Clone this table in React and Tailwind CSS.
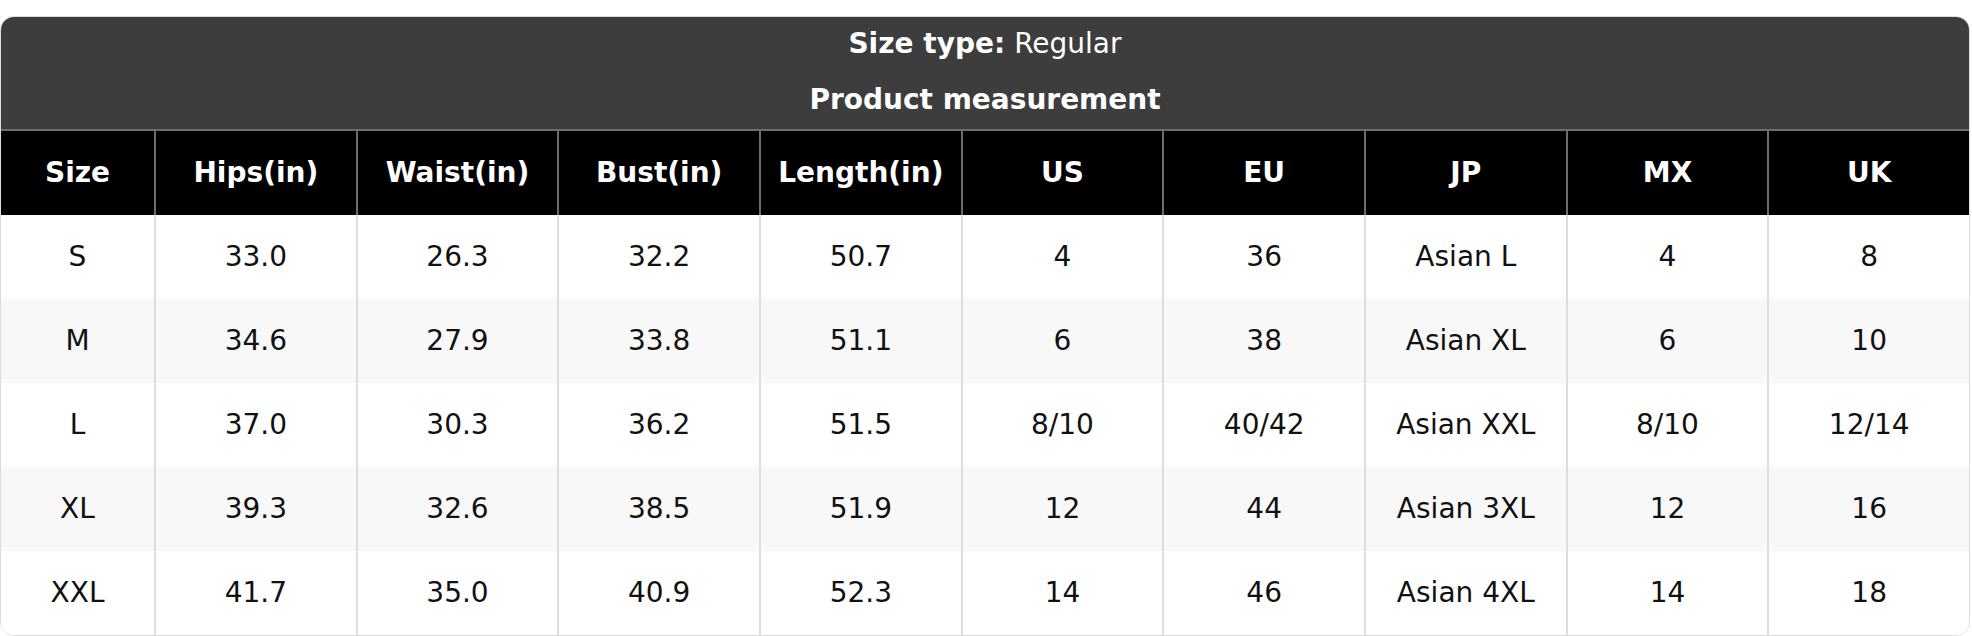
const columns = ['Size', 'Hips(in)', 'Waist(in)', 'Bust(in)', 'Length(in)', 'US', 'EU', 'JP', 'MX', 'UK'];

const rows = [
    ['S', '33.0', '26.3', '32.2', '50.7', '4', '36', 'Asian L', '4', '8'],
    ['M', '34.6', '27.9', '33.8', '51.1', '6', '38', 'Asian XL', '6', '10'],
    ['L', '37.0', '30.3', '36.2', '51.5', '8/10', '40/42', 'Asian XXL', '8/10', '12/14'],
    ['XL', '39.3', '32.6', '38.5', '51.9', '12', '44', 'Asian 3XL', '12', '16'],
    ['XXL', '41.7', '35.0', '40.9', '52.3', '14', '46', 'Asian 4XL', '14', '18'],
];

const App = () => {
    return (
        <div className="w-full min-h-screen bg-white pt-[16px]" style={{ fontFamily: '"DejaVu Sans", sans-serif' }}>
            <div className="w-[1970px] rounded-[14px] border border-[#dcdcdc] overflow-hidden text-[28px]">
                {/* title band */}
                <div className="bg-[#3d3d3d] text-white">
                    <div className="h-[54px] flex items-center justify-center">
                        <span className="font-bold">Size type:</span>
                        <span className="ml-[9px]">Regular</span>
                    </div>
                    <div className="h-[58px] flex items-center justify-center font-bold">
                        Product measurement
                    </div>
                </div>

                {/* column headers */}
                <div className="grid grid-cols-[153px_repeat(9,1fr)] bg-black text-white font-bold border-t-2 border-[#6e6e6e]">
                    {columns.map((col, i) => (
                        <div
                            key={i}
                            className={`h-[84px] flex items-center justify-center ${i > 0 ? 'border-l-2 border-[#6e6e6e]' : ''}`}
                        >
                            {col}
                        </div>
                    ))}
                </div>

                {/* body */}
                {rows.map((row, r) => (
                    <div
                        key={r}
                        className={`grid grid-cols-[153px_repeat(9,1fr)] text-[#111] ${r % 2 === 1 ? 'bg-[#f8f8f8]' : 'bg-white'}`}
                    >
                        {row.map((cell, i) => (
                            <div
                                key={i}
                                className={`h-[84px] flex items-center justify-center ${i > 0 ? 'border-l-2 border-[#dedede]' : ''}`}
                            >
                                {cell}
                            </div>
                        ))}
                    </div>
                ))}
            </div>
        </div>
    );
};

export default App;
